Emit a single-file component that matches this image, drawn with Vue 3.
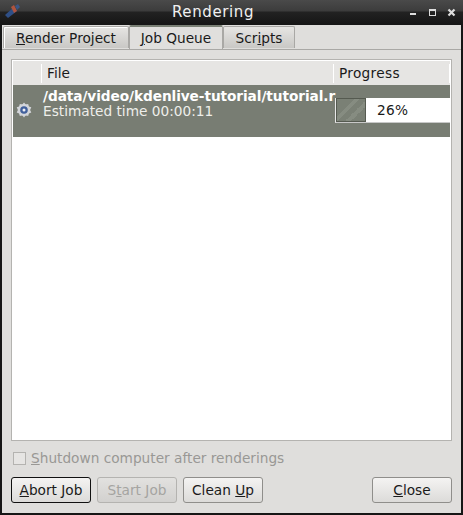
<script setup>
const buttons = [
  { pre: '', key: 'A', post: 'bort Job', cls: 'focused' },
  { pre: 'S', key: 't', post: 'art Job', cls: 'disabled' },
  { pre: 'Clean ', key: 'U', post: 'p', cls: '' },
]
</script>

<template>
  <div class="window">
    <div class="titlebar">
      <svg class="app-icon" width="18" height="16" viewBox="0 0 18 16">
        <path d="M2 12 L11 4 L14 8 L5 15 Z" fill="#2f4f86" />
        <path d="M8 4 L11 2 L14 8 L11 10 Z" fill="#b0543e" />
        <path d="M12 3 L15 1 L17 4 L14 7 Z" fill="#3a5684" />
      </svg>
      <span class="title">Rendering</span>
      <div class="win-buttons">
        <svg width="10" height="10" viewBox="0 0 10 10"><rect x="1" y="5" width="6" height="2" fill="#ddd" /></svg>
        <svg width="10" height="10" viewBox="0 0 10 10"><rect x="1.5" y="1.5" width="6" height="6" fill="none" stroke="#ddd" /><rect x="1" y="1" width="7" height="2" fill="#ddd" /></svg>
        <svg width="10" height="10" viewBox="0 0 10 10"><path d="M1.5 1.5 L7.5 7.5 M7.5 1.5 L1.5 7.5" stroke="#ddd" stroke-width="2.2" /></svg>
      </div>
    </div>

    <div class="body">
      <div class="tabs">
        <div class="tab first"><u>R</u>ender Project</div>
        <div class="tab active"><u>J</u>ob Queue</div>
        <div class="tab last">Scr<u>i</u>pts</div>
      </div>

      <div class="pane">
        <div class="tree">
          <div class="tree-head">
            <div class="col-icon"></div>
            <div class="col-file">File</div>
            <div class="col-progress">Progress</div>
          </div>
          <div class="job">
            <div class="job-icon">
              <svg width="16" height="16" viewBox="0 0 16 16">
                <circle cx="8" cy="8" r="6" fill="#c9ccd0" />
                <path d="M8 0.5 L9.7 2.6 L12.2 1.9 L12.8 4.4 L15.3 5.3 L14.1 7.9 L15.3 10.5 L12.8 11.4 L12.2 13.9 L9.7 13.3 L8 15.5 L6.3 13.3 L3.8 13.9 L3.2 11.4 L0.7 10.5 L1.9 7.9 L0.7 5.3 L3.2 4.4 L3.8 1.9 L6.3 2.6 Z" fill="#d3d5d9" />
                <circle cx="8" cy="8" r="3.8" fill="#41609c" />
                <circle cx="8" cy="8" r="1.5" fill="#eef0f5" />
              </svg>
            </div>
            <div class="job-text">
              <div class="job-path">/data/video/kdenlive-tutorial/tutorial.r</div>
              <div class="job-time">Estimated time 00:00:11</div>
            </div>
            <div class="job-progress">
              <div class="bar">
                <div class="chunk"></div>
                <span class="percent">26%</span>
              </div>
            </div>
          </div>
        </div>

        <label class="shutdown">
          <span class="check"></span>
          <span><u>S</u>hutdown computer after renderings</span>
        </label>

        <div class="actions">
          <div v-for="b in buttons" :key="b.post" class="btn" :class="b.cls">
            {{ b.pre }}<u>{{ b.key }}</u>{{ b.post }}
          </div>
          <div class="spacer"></div>
          <div class="btn"><u>C</u>lose</div>
        </div>
      </div>
    </div>
  </div>
</template>

<style>
html, body {
  margin: 0;
  background: #1a1a1a;
}
</style>

<style scoped>
.window {
  width: 463px;
  height: 515px;
  display: flex;
  flex-direction: column;
  background: #161616;
  font-family: "DejaVu Sans", sans-serif;
  font-size: 13.7px;
  color: #1a1a1a;
  overflow: hidden;
}

.titlebar {
  height: 24px;
  flex: none;
  position: relative;
  display: flex;
  align-items: center;
  justify-content: center;
  background: linear-gradient(#4a4a4a 0, #3c3c3c 11px, #222 12px, #161616 24px);
}

.app-icon {
  position: absolute;
  left: 3px;
  top: 3px;
}

.title {
  color: #f0f0f0;
  font-size: 15px;
  letter-spacing: 0.6px;
  margin-top: -1px;
  margin-right: 37px;
}

.win-buttons {
  position: absolute;
  right: 0;
  top: 8px;
  display: flex;
  gap: 9px;
  padding-right: 6px;
}

.body {
  flex: 1;
  margin: 1px 2px 2px;
  background: #dfdedc;
  display: flex;
  flex-direction: column;
}

.tabs {
  height: 23px;
  flex: none;
  display: flex;
  align-items: flex-end;
  padding-left: 1px;
}

.tab {
  box-sizing: border-box;
  height: 22px;
  line-height: 22px;
  text-align: center;
  border: 1px solid #a9a8a5;
  border-bottom: none;
  background: linear-gradient(#e6e5e3, #c9c8c5);
  border-radius: 2px 2px 0 0;
}

.tab.first {
  width: 126px;
  box-shadow: inset 1px 1px 0 #fff;
}

.tab.active {
  width: 94px;
  height: 24px;
  line-height: 22px;
  background: #e0dfdd;
  border-top: 2px solid #7a8075;
  position: relative;
  top: 1px;
}

.tab.last {
  width: 72px;
}

.pane {
  flex: 1;
  border-top: 1px solid #a9a8a5;
  padding: 9px 9px 8px;
  display: flex;
  flex-direction: column;
  margin-top: 1px;
}

.tree {
  box-sizing: border-box;
  height: 382px;
  flex: none;
  background: #fff;
  border: 1px solid #b4b3b0;
  padding: 1px;
}

.tree-head {
  height: 24px;
  display: flex;
  align-items: center;
  background: #e6e5e3;
}

.col-icon {
  width: 28px;
  height: 20px;
}

.col-file {
  width: 286px;
  height: 19px;
  line-height: 19px;
  padding-left: 5px;
  border-left: 1px solid #fff;
}

.col-progress {
  flex: 1;
  height: 19px;
  line-height: 19px;
  padding-left: 5px;
  letter-spacing: 0.3px;
  border-left: 1px solid #fff;
  border-right: 1px solid #fff;
}

.job {
  height: 52px;
  display: flex;
  background: #787d73;
  color: #fff;
}

.job-icon {
  width: 22px;
  padding-left: 3px;
  padding-top: 17px;
  box-sizing: border-box;
  flex: none;
}

.job-text {
  width: 300px;
  padding-left: 8px;
  padding-top: 4px;
  white-space: nowrap;
  box-sizing: border-box;
  line-height: 15px;
}

.job-path {
  font-weight: bold;
  letter-spacing: -0.08px;
}

.job-time {
  color: #eeeeea;
}

.job-progress {
  flex: 1;
  padding-top: 13px;
}

.bar {
  box-sizing: border-box;
  height: 25px;
  display: flex;
  align-items: center;
  background: #fff;
  border-left: 1px solid #e8e8e8;
  border-bottom: 1px solid #c8c8c8;
  color: #1a1a1a;
}

.chunk {
  box-sizing: border-box;
  width: 30px;
  height: 24px;
  flex: none;
  border: 1px solid #555a50;
  background: linear-gradient(135deg, #7a8075 0 35%, #868c81 35% 45%, #7a8075 45% 60%, #868c81 60% 72%, #7a8075 72%);
}

.percent {
  margin-left: 11px;
  letter-spacing: 0.3px;
}

.shutdown {
  display: flex;
  align-items: center;
  gap: 5px;
  height: 16px;
  margin-top: 9px;
  margin-left: 2px;
  color: #999895;
}

.check {
  box-sizing: border-box;
  width: 13px;
  height: 13px;
  border: 1px solid #b4b3b0;
  background: #e6e5e3;
}

.actions {
  display: flex;
  gap: 6px;
  margin-top: 11px;
}

.spacer {
  flex: 1;
}

.btn {
  box-sizing: border-box;
  width: 80px;
  height: 26px;
  line-height: 24px;
  text-align: center;
  border: 1px solid #8f8e8b;
  border-radius: 3px;
  background: linear-gradient(#f4f3f2, #dcdbd9);
}

.btn.focused {
  border-color: #111;
}

.btn.disabled {
  color: #a5a4a1;
  border-color: #b4b3b0;
  background: linear-gradient(#e2e1df, #d2d1cf);
}
</style>
